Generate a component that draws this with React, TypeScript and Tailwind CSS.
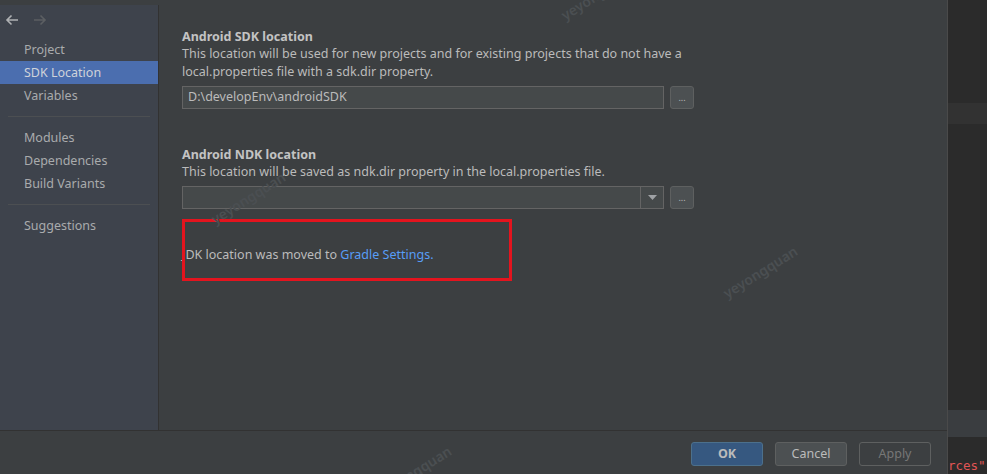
import React from "react";

const font = { fontFamily: '"Noto Sans", "Open Sans", sans-serif' };

const navItems = [
  { group: ["Project", "SDK Location", "Variables"] },
  { group: ["Modules", "Dependencies", "Build Variants"] },
  { group: ["Suggestions"] },
];

const Watermark = ({ x, y }: { x: number; y: number }) => (
  <span
    className="pointer-events-none absolute origin-bottom-left -rotate-[32deg] whitespace-nowrap text-[14px] font-semibold text-[#4b4f52]"
    style={{ left: x, top: y - 18 }}
  >
    yeyongquan
  </span>
);

const DotsButton = () => (
  <button className="flex h-[23px] w-[24px] items-end justify-center rounded-[3px] border border-[#5e6060] bg-[#4c5052] pb-[6px] text-[9px] leading-none text-[#bbbbbb]">
    ...
  </button>
);

export default function App() {
  return (
    <div className="relative flex h-[474px] w-[987px] overflow-hidden bg-[#3c3f41] text-[12.5px] text-[#bbbbbb]" style={font}>
      {/* dialog */}
      <div className="flex w-[947px] shrink-0 flex-col">
        <div className="flex h-[431px] border-b border-[#323232]">
          {/* sidebar */}
          <aside className="mt-[5px] flex w-[159px] shrink-0 flex-col border-r border-[#323232] bg-[#3e434c]">
            <div className="flex h-[28px] items-center gap-[12px] pl-[4px] pt-[1px]">
              <svg width="16" height="16" viewBox="0 0 16 16" fill="none" stroke="#afb1b3" strokeWidth="1.6">
                <path d="M14 8H3M7.5 3.5L3 8l4.5 4.5" />
              </svg>
              <svg width="16" height="16" viewBox="0 0 16 16" fill="none" stroke="#5c5f62" strokeWidth="1.6">
                <path d="M2 8h11M8.5 3.5L13 8l-4.5 4.5" />
              </svg>
            </div>
            <div className="pt-[5px]">
              {navItems.map((g, gi) => (
                <div key={gi}>
                  {gi > 0 && <div className="mx-[8px] my-[9px] border-t border-[#4c4f52]" />}
                  {g.group.map((item) => (
                    <div
                      key={item}
                      className={`h-[23px] pl-[24px] leading-[23px] ${
                        item === "SDK Location" ? "bg-[#4b6eaf] text-[#cfd3da]" : "text-[#a9abad]"
                      }`}
                    >
                      {item}
                    </div>
                  ))}
                </div>
              ))}
            </div>
          </aside>

          {/* content */}
          <main className="flex-1 pl-[23px] pt-[28px]">
            <div className="w-[520px]">
              <h2 className="text-[12.5px] font-bold leading-[17px] text-[#c3c3c3]">Android SDK location</h2>
              <p className="leading-[18px]">
                This location will be used for new projects and for existing projects that do not have a<br />
                local.properties file with a sdk.dir property.
              </p>
              <div className="mt-[5px] flex gap-[6px]">
                <div className="flex h-[23px] w-[482px] items-center border border-[#646464] bg-[#45494a] pl-[5px]">
                  D:\developEnv\androidSDK
                </div>
                <DotsButton />
              </div>

              <h2 className="mt-[37px] text-[12.5px] font-bold leading-[17px] text-[#c3c3c3]">Android NDK location</h2>
              <p className="leading-[18px]">This location will be saved as ndk.dir property in the local.properties file.</p>
              <div className="mt-[5px] flex gap-[6px]">
                <div className="flex h-[23px] w-[482px] border border-[#646464] bg-[#45494a]">
                  <div className="flex-1" />
                  <div className="flex w-[23px] items-center justify-center border-l border-[#646464]">
                    <svg width="9" height="5" viewBox="0 0 9 5">
                      <path d="M0 0h9L4.5 5z" fill="#9fa2a5" />
                    </svg>
                  </div>
                </div>
                <DotsButton />
              </div>

              <div className="relative mt-[10px] h-[62px] w-[330px]">
                <p className="pt-[27px] leading-[18px]">
                  JDK location was moved to <span className="text-[#589df6]">Gradle Settings.</span>
                </p>
                <div className="absolute inset-0 border-[3px] border-[#e4141e]" />
              </div>
            </div>
          </main>
        </div>

        {/* footer */}
        <div className="flex flex-1 items-center justify-end gap-[12px] pr-[16px] pt-[3px]">
          <button className="h-[24px] w-[72px] rounded-[3px] border border-[#4c708c] bg-[#365880] text-[12.5px] font-bold text-[#bbbbbb]">OK</button>
          <button className="h-[24px] w-[72px] rounded-[3px] border border-[#5e6060] bg-[#4c5052] text-[12.5px] text-[#bbbbbb]">Cancel</button>
          <button className="h-[24px] w-[72px] rounded-[3px] border border-[#5e6060] text-[12.5px] text-[#777777]">Apply</button>
        </div>
      </div>

      {/* editor behind */}
      <div className="flex min-w-0 flex-1 flex-col overflow-hidden border-l border-[#4a4a4a] bg-[#2b2b2b]">
        <div className="h-[103px]" />
        <div className="h-[21px] bg-[#323232]" />
        <div className="h-[286px]" />
        <div className="h-[27px] bg-[#3a3d40]" />
        <div className="whitespace-nowrap pt-[21px] text-[12.5px] leading-[16px] text-[#e05555]" style={{ fontFamily: '"DejaVu Sans Mono", monospace' }}>
          rces"
        </div>
      </div>

      <Watermark x={568} y={22} />
      <Watermark x={218} y={226} />
      <Watermark x={730} y={300} />
      <Watermark x={384} y={500} />
    </div>
  );
}
